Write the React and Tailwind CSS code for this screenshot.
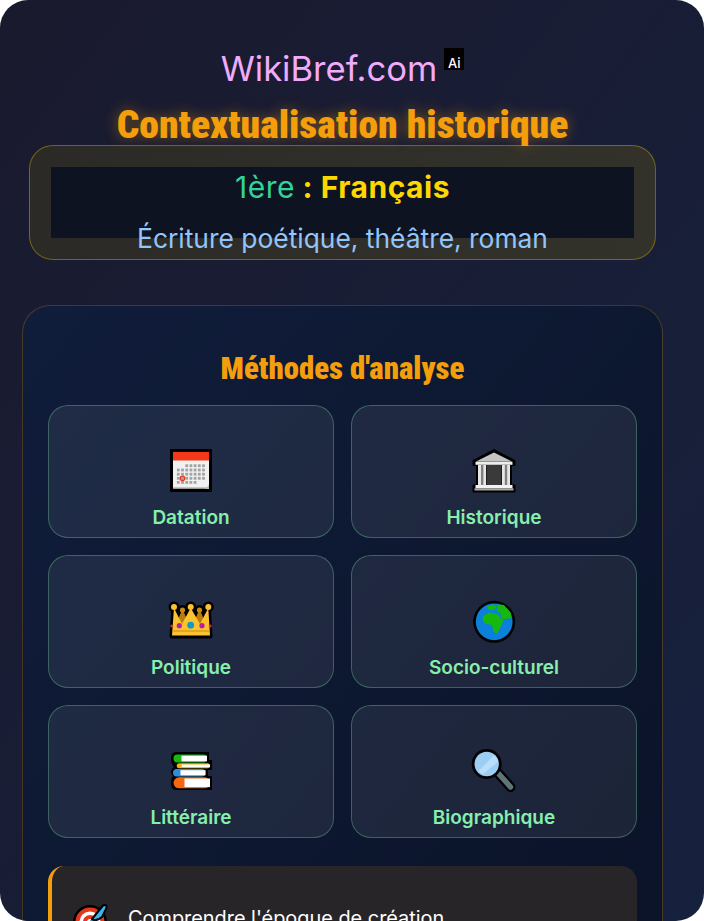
const Frame = ({ children }) => (
  <svg width="46" height="46" viewBox="0 0 46 46" className="shrink-0">{children}</svg>
)

const CalendarIcon = () => {
  const cols = [10.3, 14.5, 18.7, 22.9, 27.1, 31.3, 35.5]
  const rows = [18.7, 23, 27.2, 31.3, 35.4]
  return (
    <Frame>
      <rect x="2" y="2" width="42" height="43" fill="#000" />
      <rect x="5" y="5" width="36" height="37" fill="#f1f1f1" />
      <rect x="5" y="5" width="36" height="8.5" fill="#f4391a" />
      <rect x="5" y="40.5" width="36" height="1.5" fill="#999" />
      <path d="M37 42l4-4v4z" fill="#bbb" />
      {rows.map((y, r) =>
        cols.map((x, c) => {
          if (r === 0 && c < 2) return null
          if (r === 4 && c > 4) return null
          return <rect key={`${r}-${c}`} x={x - 1.4} y={y - 1.4} width="2.8" height="2.8" fill="#a3a3a3" />
        })
      )}
      <circle cx="14.5" cy="31.3" r="2.2" fill="none" stroke="#ee3a1c" strokeWidth="1.3" />
    </Frame>
  )
}

const TempleIcon = () => (
  <Frame>
    <path
      d="M23 2.5L44 13.5V18.5H40.5V38H44V45H2V38H5.5V18.5H2V13.5Z"
      fill="#000"
      stroke="#000"
      strokeWidth="1"
      strokeLinejoin="round"
    />
    <path d="M23 5.5L41.5 14.8H4.5Z" fill="#c4c4c4" />
    <rect x="4.5" y="15" width="37" height="2.8" fill="#ededed" />
    <rect x="15.5" y="18" width="15" height="20" fill="#3a3a3a" />
    <rect x="7" y="18" width="8" height="20" fill="#e6e6e6" />
    <rect x="10" y="18" width="2.4" height="20" fill="#808080" />
    <rect x="31" y="18" width="8" height="20" fill="#e6e6e6" />
    <rect x="33.8" y="18" width="2.4" height="20" fill="#808080" />
    <rect x="4.5" y="38" width="37" height="3.2" fill="#f2f2f2" />
    <rect x="3.5" y="41.2" width="39" height="2.3" fill="#a8a8a8" />
  </Frame>
)

const CrownIcon = () => (
  <Frame>
    <g stroke="#000" strokeWidth="5" strokeLinejoin="round">
      <path d="M6 11L14 12L22.7 11L32 12L40.3 11L42 39H4Z" fill="#000" />
      <circle cx="6" cy="10" r="3" />
      <circle cx="22.7" cy="10" r="3" />
      <circle cx="40.3" cy="10" r="3" />
      <circle cx="14.5" cy="13" r="2.5" />
      <circle cx="31.5" cy="13" r="2.5" />
    </g>
    <path d="M14.5 12L9 25L14.5 32L20 25Z" fill="#b97c0c" />
    <path d="M31.5 12L26 25L31.5 32L37 25Z" fill="#b97c0c" />
    <circle cx="14.5" cy="13" r="2.6" fill="#c98a12" />
    <circle cx="31.5" cy="13" r="2.6" fill="#c98a12" />
    <path d="M6 11L14 27L22.7 11L32 27L40.3 11L42 38.5H4Z" fill="#fcc22f" />
    <circle cx="6" cy="10" r="3" fill="#fcc22f" />
    <circle cx="22.7" cy="10" r="3" fill="#fcc22f" />
    <circle cx="40.3" cy="10" r="3" fill="#fcc22f" />
    <rect x="4" y="33.5" width="38" height="1" fill="#c98a12" />
    <circle cx="11.3" cy="28.7" r="2.6" fill="#b51fa8" />
    <circle cx="22.7" cy="28.2" r="3.4" fill="#0f9bc4" />
    <circle cx="34" cy="28.7" r="2.6" fill="#b51fa8" />
    <circle cx="3.8" cy="29" r="1.5" fill="#d8332a" />
    <circle cx="42.2" cy="29" r="1.5" fill="#d8332a" />
  </Frame>
)

const GlobeIcon = () => (
  <Frame>
    <circle cx="23.2" cy="24.8" r="21" fill="#000" />
    <circle cx="23.2" cy="24.8" r="18.4" fill="#0a80db" />
    <path d="M12.5 18.5L19 15.5L27 17.5L30.5 23L33 22.5L29 31L26 36.5L22.5 35L21 28L14 26.5L11.5 22.5Z" fill="#17b80e" />
    <path d="M16 9.5L22 7.5L26 9L23.5 13L17.5 13Z" fill="#17b80e" />
    <path d="M27 7.5L33 8L40 16L40.5 21L34 22L30.5 21.5L29 15.5L25.5 13.5Z" fill="#17b80e" />
  </Frame>
)

const BookIcon = ({ x, y, w, h, color }) => (
  <>
    <rect x={x} y={y} width={w} height={h} rx={h / 2} fill={color} />
    <rect x={x + h} y={y + 1.2} width={w - h} height={h - 2.4} fill="#fff" />
  </>
)

const BooksIcon = () => (
  <Frame>
    <path
      d="M8 5H41V13H44V23H40V29H44V43H8Q3 43 3 36Q3 31 5 29Q3 27 3 25Q3 22 6 20Q3 17 3 12Q3 5 8 5Z"
      fill="#000"
    />
    <BookIcon x={5.5} y={7.5} w={33.5} h={8} color="#19b80f" />
    <BookIcon x={8.7} y={16.3} w={33.3} h={5} color="#f3b30d" />
    <BookIcon x={5} y={22} w={32.5} h={7.5} color="#2b8fdc" />
    <BookIcon x={5.5} y={30.3} w={36.5} h={11} color="#f4660f" />
  </Frame>
)

const SearchIcon = () => (
  <Frame>
    <path d="M27 26L39.5 40" stroke="#000" strokeWidth="10" strokeLinecap="round" />
    <path d="M27 26L39.5 40" stroke="#5f7679" strokeWidth="5.5" strokeLinecap="round" />
    <circle cx="15.7" cy="17" r="15" fill="#000" />
    <circle cx="15.7" cy="17" r="12.2" fill="#9ccdf2" />
    <path d="M7.5 24L23 8.5Q27 12 27 15L12 27Q9 26 7.5 24Z" fill="#b9def8" />
  </Frame>
)

const TargetIcon = () => (
  <svg width="36" height="36" viewBox="0 0 36 36" className="shrink-0">
    <circle cx="18" cy="19" r="17" fill="#000" />
    <circle cx="18" cy="19" r="14.5" fill="#e5371c" />
    <circle cx="18" cy="19" r="10.5" fill="#fff" />
    <circle cx="18" cy="19" r="7" fill="#e5371c" />
    <circle cx="18" cy="19" r="3" fill="#fff" />
    <path d="M18 19L26 12" stroke="#2b8fdc" strokeWidth="2" />
    <path d="M20 16L31 2.5Q35 1 34.5 5L30 14Q24 19 20 16Z" fill="#3bb5f0" stroke="#000" strokeWidth="2" strokeLinejoin="round" />
  </svg>
)

const methods = [
  { Icon: CalendarIcon, label: 'Datation' },
  { Icon: TempleIcon, label: 'Historique' },
  { Icon: CrownIcon, label: 'Politique' },
  { Icon: GlobeIcon, label: 'Socio-culturel' },
  { Icon: BooksIcon, label: 'Littéraire' },
  { Icon: SearchIcon, label: 'Biographique' },
]

export default function App() {
  return (
    <div className="h-[921px] overflow-hidden bg-white font-['Inter',sans-serif]">
      <div className="h-full overflow-hidden rounded-[28px] bg-gradient-to-br from-[#1a1a2e] to-[#16213e] pl-[22px] pr-[41px] pt-12">
        <header className="flex flex-col items-center">
          <div className="flex h-[40px] items-start justify-center">
            <span className="text-[34.6px] leading-[40px] text-[#f0abfc]">WikiBref.com</span>
            <span className="ml-[7px] flex h-[22px] w-5 items-end justify-center bg-black text-[13px] leading-[14px] font-medium text-white">Ai</span>
          </div>
          <h1 className="mt-[15px] text-[39.6px] leading-[44px] font-black text-[#f59e0b] font-['Roboto',sans-serif] [font-stretch:condensed] [text-shadow:0_0_14px_rgba(245,158,11,0.45)]">
            Contextualisation historique
          </h1>
        </header>

        <div className="mx-[7px] -mt-[2px] h-[115px] rounded-3xl border border-[#ffd70055] bg-gradient-to-r from-[#2b2a27] to-[#33322a] p-[21px]">
          <div className="h-[71px] bg-[#0d1321] text-center">
            <p className="text-[30px] leading-[41px] tracking-[0.5px]">
              <span className="text-[#34d399]">1ère</span>
              <span className="font-bold text-[#ffd700]"> : Français</span>
            </p>
            <p className="mt-[10px] text-[26.4px] leading-[40px] text-[#93c5fd]">Écriture poétique, théâtre, roman</p>
          </div>
        </div>

        <main className="mt-[45px] h-[800px] rounded-[28px] border border-[#f59e0b40] bg-gradient-to-br from-[#101d3b] to-[#0a1226] px-[25px] pt-[44px]">
          <h2 className="text-center text-[30.8px] leading-[38px] font-black text-[#f59e0b] font-['Roboto',sans-serif] [font-stretch:condensed]">
            Méthodes d'analyse
          </h2>
          <div className="mt-[17px] grid grid-cols-2 gap-[17px]">
            {methods.map(({ Icon, label }) => (
              <div
                key={label}
                className="flex h-[133px] flex-col items-center justify-end rounded-[20px] border border-[#86efac4d] bg-[#ffffff12] pb-[5px]"
              >
                <Icon />
                <span className="mt-[11px] text-[19px] leading-[28px] font-semibold text-[#86efac]">{label}</span>
              </div>
            ))}
          </div>
          <div className="mt-[28px] flex h-[120px] items-start gap-5 rounded-2xl border-l-4 border-[#f59e0b] bg-[#272528] pl-[20px] pt-[37px]">
            <TargetIcon />
            <span className="mt-px text-[19.9px] leading-[28px] text-white">Comprendre l'époque de création</span>
          </div>
        </main>
      </div>
    </div>
  )
}
